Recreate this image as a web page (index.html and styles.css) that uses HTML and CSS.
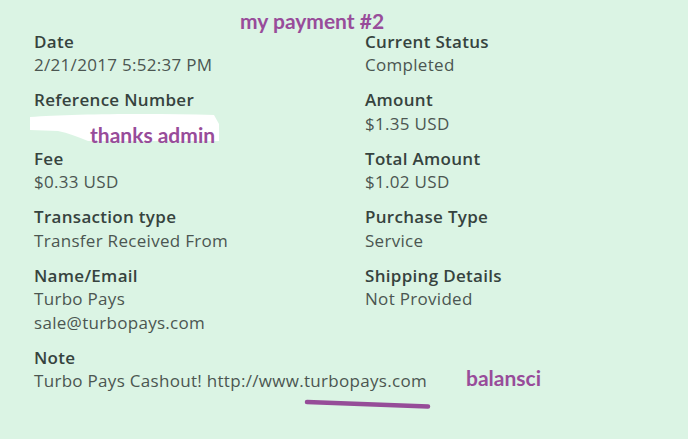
FILE: index.html
```html
<!DOCTYPE html>
<html lang="en">
<head>
<meta charset="utf-8">
<title>my payment #2</title>
<link rel="stylesheet" href="styles.css">
</head>
<body>
<div class="page">
  <div class="details">
    <div class="field"><div class="label">Date</div><div class="value">2/21/2017 5:52:37 PM</div></div>
    <div class="field"><div class="label">Current Status</div><div class="value">Completed</div></div>
    <div class="field"><div class="label">Reference Number</div><div class="value">&nbsp;</div></div>
    <div class="field"><div class="label">Amount</div><div class="value">$1.35 USD</div></div>
    <div class="field"><div class="label">Fee</div><div class="value">$0.33 USD</div></div>
    <div class="field"><div class="label">Total Amount</div><div class="value">$1.02 USD</div></div>
    <div class="field"><div class="label">Transaction type</div><div class="value">Transfer Received From</div></div>
    <div class="field"><div class="label">Purchase Type</div><div class="value">Service</div></div>
    <div class="field"><div class="label">Name/Email</div><div class="value">Turbo Pays</div><div class="value">sale@turbopays.com</div></div>
    <div class="field"><div class="label">Shipping Details</div><div class="value">Not Provided</div></div>
    <div class="field wide"><div class="label">Note</div><div class="value">Turbo Pays Cashout! http://www.turbopays.com</div></div>
  </div>

  <svg class="marks" width="688" height="439" viewBox="0 0 688 439" aria-hidden="true">
    <defs>
      <filter id="soft" x="-5%" y="-20%" width="110%" height="140%">
        <feGaussianBlur stdDeviation="0.7"/>
      </filter>
    </defs>
    <path d="M30,117 C70,114 150,113 214,115 L219,124 L219,141 L88,141 C78,137 68,133 58,131 L30,130 Z" fill="#ffffff" filter="url(#soft)"/>
    <path d="M307,402 C340,403 380,405 428,406.5" stroke="#964c98" stroke-width="4.5" stroke-linecap="round" fill="none"/>
  </svg>

  <div class="note-text title">my payment #2</div>
  <div class="note-text thanks">thanks admin</div>
  <div class="note-text balansci">balansci</div>
</div>
</body>
</html>
```

FILE: styles.css
```css
html, body {
  margin: 0;
  padding: 0;
  background: #dbf4e4;
}

.page {
  position: relative;
  width: 688px;
  height: 439px;
  overflow: hidden;
  background: #dbf4e4;
  font-family: "Open Sans", "Liberation Sans", sans-serif;
  font-size: 17px;
  line-height: 23.5px;
  letter-spacing: 0.3px;
}

.details {
  display: grid;
  grid-template-columns: 331px 1fr;
  row-gap: 11.5px;
  padding: 29.5px 0 0 34px;
}

.field.wide {
  grid-column: 1 / -1;
}

.label {
  font-weight: 600;
  color: #36433e;
}

.value {
  font-weight: 400;
  color: #4b5651;
  white-space: nowrap;
}

.marks {
  position: absolute;
  left: 0;
  top: 0;
}

.note-text {
  position: absolute;
  font-family: Lato, "Open Sans", sans-serif;
  font-weight: 700;
  font-size: 21px;
  line-height: 21px;
  letter-spacing: 0;
  color: #984c9a;
  white-space: nowrap;
}

.title {
  left: 240px;
  top: 10px;
}

.thanks {
  left: 90px;
  top: 124px;
}

.balansci {
  left: 466px;
  top: 367px;
}
```
